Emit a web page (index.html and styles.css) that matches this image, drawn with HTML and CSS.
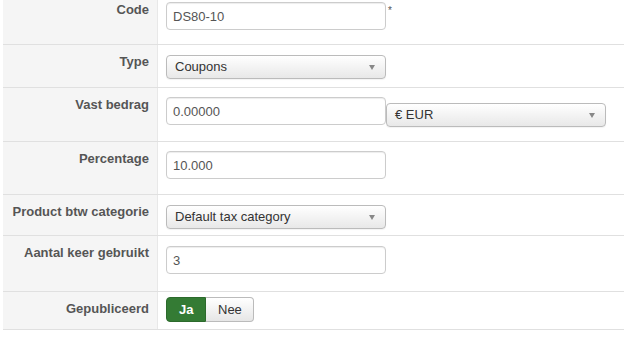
FILE: index.html
```html
<!DOCTYPE html>
<html lang="nl">

<head>
    <meta charset="UTF-8">
    <meta name="viewport" content="width=device-width, initial-scale=1.0">
    <link rel="stylesheet" href="styles.css">
</head>

<body>

    <div class="form-table">
        <div class="form-row row-code">
            <div class="form-label">Code</div>
            <div class="form-value">
                <input type="text" class="text-input" value="DS80-10">
                <span class="required">*</span>
            </div>
        </div>

        <div class="form-row row-type">
            <div class="form-label">Type</div>
            <div class="form-value">
                <div class="select-box">Coupons<span class="caret"></span></div>
            </div>
        </div>

        <div class="form-row row-amount">
            <div class="form-label">Vast bedrag</div>
            <div class="form-value">
                <input type="text" class="text-input" value="0.00000">
                <div class="select-box currency">€ EUR<span class="caret"></span></div>
            </div>
        </div>

        <div class="form-row row-percent">
            <div class="form-label">Percentage</div>
            <div class="form-value">
                <input type="text" class="text-input" value="10.000">
            </div>
        </div>

        <div class="form-row row-tax">
            <div class="form-label">Product btw categorie</div>
            <div class="form-value">
                <div class="select-box">Default tax category<span class="caret"></span></div>
            </div>
        </div>

        <div class="form-row row-used">
            <div class="form-label">Aantal keer gebruikt</div>
            <div class="form-value">
                <input type="text" class="text-input" value="3">
            </div>
        </div>

        <div class="form-row row-published">
            <div class="form-label">Gepubliceerd</div>
            <div class="form-value">
                <div class="toggle-group">
                    <button class="toggle-btn active">Ja</button>
                    <button class="toggle-btn">Nee</button>
                </div>
            </div>
        </div>
    </div>

</body>

</html>
```

FILE: styles.css
```css
body {
    margin: 0;
    padding: 0;
    font-family: "Liberation Sans", Arial, sans-serif;
    font-size: 13px;
    color: #555;
    background-color: #fff;
    overflow: hidden;
}

.form-table {
    margin: -7px 0 0 3px;
}

.form-row {
    display: flex;
    border-bottom: 1px solid #e0e0e0;
    box-sizing: border-box;
}

.form-label {
    width: 155px;
    flex-shrink: 0;
    box-sizing: border-box;
    padding: 8px 8px 0 0;
    background-color: #f5f5f5;
    border-right: 1px solid #e8e8e8;
    text-align: right;
    font-weight: bold;
    line-height: 18px;
    color: #555;
}

.form-value {
    display: flex;
    align-items: flex-start;
    padding: 9px 0 0 8px;
    flex: 1;
}

.row-code { height: 52px; }
.row-type { height: 43px; }
.row-amount { height: 54px; }
.row-percent { height: 53px; }
.row-tax { height: 41px; }
.row-used { height: 56px; }
.row-published { height: 38px; }

.row-type .form-value,
.row-tax .form-value,
.row-used .form-value {
    padding-top: 10px;
}

.row-published .form-value {
    padding-top: 5px;
}

.text-input {
    width: 220px;
    height: 28px;
    box-sizing: border-box;
    margin: 0;
    padding: 0 6px;
    border: 1px solid #ccc;
    border-radius: 4px;
    box-shadow: inset 0 1px 1px rgba(0, 0, 0, 0.075);
    font-family: "Liberation Sans", Arial, sans-serif;
    font-size: 13px;
    color: #555;
    background-color: #fff;
}

.required {
    margin: 3px 0 0 2px;
    font-size: 10px;
    color: #555;
}

.select-box {
    position: relative;
    width: 220px;
    height: 24px;
    box-sizing: border-box;
    padding: 0 8px;
    border: 1px solid #bbb;
    border-radius: 4px;
    background: linear-gradient(#fff, #e8e8e8);
    box-shadow: 0 1px 1px rgba(0, 0, 0, 0.05);
    line-height: 22px;
    color: #333;
}

.select-box.currency {
    margin-top: 6px;
}

.caret {
    position: absolute;
    right: 10px;
    top: 9px;
    border-left: 3px solid transparent;
    border-right: 3px solid transparent;
    border-top: 5px solid #888;
}

.toggle-group {
    display: flex;
}

.toggle-btn {
    height: 25px;
    padding: 0 12px;
    margin: 0;
    border: 1px solid #bbb;
    background: linear-gradient(#fff, #e6e6e6);
    font-family: "Liberation Sans", Arial, sans-serif;
    font-size: 13px;
    color: #333;
    cursor: pointer;
}

.toggle-btn:first-child {
    border-radius: 4px 0 0 4px;
}

.toggle-btn:last-child {
    border-radius: 0 4px 4px 0;
    border-left: none;
    width: 48px;
}

.toggle-btn.active {
    width: 40px;
    background: #347b34;
    border-color: #2c6a2c;
    color: #fff;
    font-weight: bold;
}
```
